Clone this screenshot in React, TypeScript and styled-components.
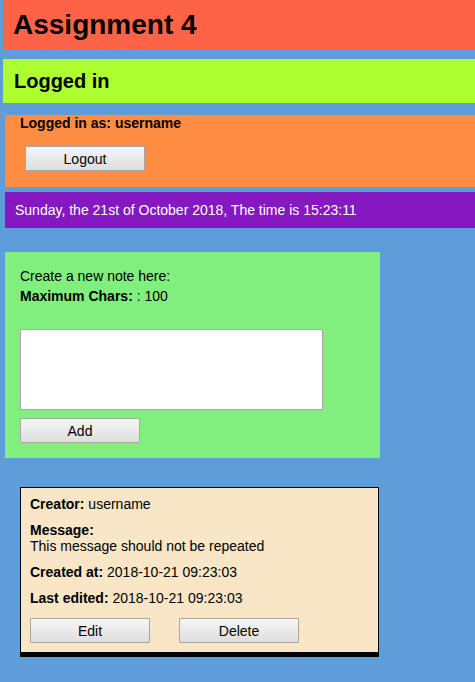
import React from "react";
import styled, { createGlobalStyle } from "styled-components";

const Global = createGlobalStyle`
  html, body { margin: 0; padding: 0; }
  body {
    background: #5e9dd8;
    font-family: "Liberation Sans", Arial, sans-serif;
    font-size: 14px;
    color: #000;
  }
`;

const Page = styled.div`
  display: flex;
  flex-direction: column;
  padding-bottom: 26px;
`;

const Header = styled.header`
  margin-left: 3px;
  height: 49px;
  background: #ff6347;
  display: flex;
  align-items: center;
  padding-left: 10px;
`;

const Title = styled.h1`
  margin: 0;
  font-size: 28px;
  font-weight: bold;
`;

const StatusBar = styled.div`
  margin: 10px 0 0 3px;
  height: 44px;
  background: #adff2f;
  display: flex;
  align-items: center;
  padding-left: 11px;
`;

const Subtitle = styled.h2`
  margin: 0;
  font-size: 20px;
  font-weight: bold;
`;

const UserPanel = styled.div`
  margin: 12px 0 0 5px;
  height: 72px;
  background: #ff8c43;
  box-sizing: border-box;
  padding: 0 0 0 15px;
  display: flex;
  flex-direction: column;
  align-items: flex-start;
`;

const UserLabel = styled.div`
  font-weight: bold;
  line-height: 16px;
  margin-top: 0;
`;

const Button = styled.button<{ $indent?: number }>`
  width: 120px;
  height: 25px;
  margin-left: ${(p) => p.$indent ?? 0}px;
  padding: 0;
  font-family: "Liberation Sans", Arial, sans-serif;
  font-size: 14px;
  color: #000;
  background: linear-gradient(#f6f6f6, #dedede);
  border: 1px solid #a6a6a6;
  border-radius: 1px;
`;

const LogoutRow = styled.div`
  margin-top: 15px;
  display: flex;
`;

const ClockBar = styled.div`
  margin: 5px 0 0 5px;
  height: 36px;
  background: #8518c1;
  color: #fff;
  display: flex;
  align-items: center;
  padding-left: 10px;
`;

const NewNoteBox = styled.section`
  margin: 24px 0 0 5px;
  width: 375px;
  box-sizing: border-box;
  background: #80ef7e;
  padding: 16px 15px 15px 15px;
  display: flex;
  flex-direction: column;
  align-items: flex-start;
`;

const Line = styled.div<{ $gap?: number }>`
  line-height: 16px;
  margin-bottom: ${(p) => p.$gap ?? 0}px;
`;

const NoteInput = styled.textarea`
  width: 303px;
  height: 81px;
  box-sizing: border-box;
  border: 1px solid #a9a9a9;
  background: #fff;
  resize: none;
  margin: 0 0 8px 0;
  padding: 2px;
  font-family: "Liberation Sans", Arial, sans-serif;
  display: block;
`;

const NoteCard = styled.article`
  margin: 29px 0 0 20px;
  width: 359px;
  box-sizing: border-box;
  background: #f8e6c7;
  border: 1px solid #000;
  border-bottom-width: 5px;
  padding: 8px 10px 9px 9px;
`;

const Field = styled.p`
  margin: 0 0 10px 0;
  line-height: 16px;
`;

const ButtonRow = styled.div`
  display: flex;
  gap: 29px;
  margin-top: 12px;
`;

export default function App() {
  return (
    <Page>
      <Global />
      <Header>
        <Title>Assignment 4</Title>
      </Header>
      <StatusBar>
        <Subtitle>Logged in</Subtitle>
      </StatusBar>
      <UserPanel>
        <UserLabel>Logged in as: username</UserLabel>
        <LogoutRow>
          <Button $indent={5}>Logout</Button>
        </LogoutRow>
      </UserPanel>
      <ClockBar>Sunday, the 21st of October 2018, The time is 15:23:11</ClockBar>
      <NewNoteBox>
        <Line $gap={4}>Create a new note here:</Line>
        <Line $gap={25}>
          <b>Maximum Chars:</b> : 100
        </Line>
        <NoteInput />
        <Button>Add</Button>
      </NewNoteBox>
      <NoteCard>
        <Field>
          <b>Creator:</b> username
        </Field>
        <Field>
          <b>Message:</b>
          <br />
          This message should not be repeated
        </Field>
        <Field>
          <b>Created at:</b> 2018-10-21 09:23:03
        </Field>
        <Field>
          <b>Last edited:</b> 2018-10-21 09:23:03
        </Field>
        <ButtonRow>
          <Button>Edit</Button>
          <Button>Delete</Button>
        </ButtonRow>
      </NoteCard>
    </Page>
  );
}
